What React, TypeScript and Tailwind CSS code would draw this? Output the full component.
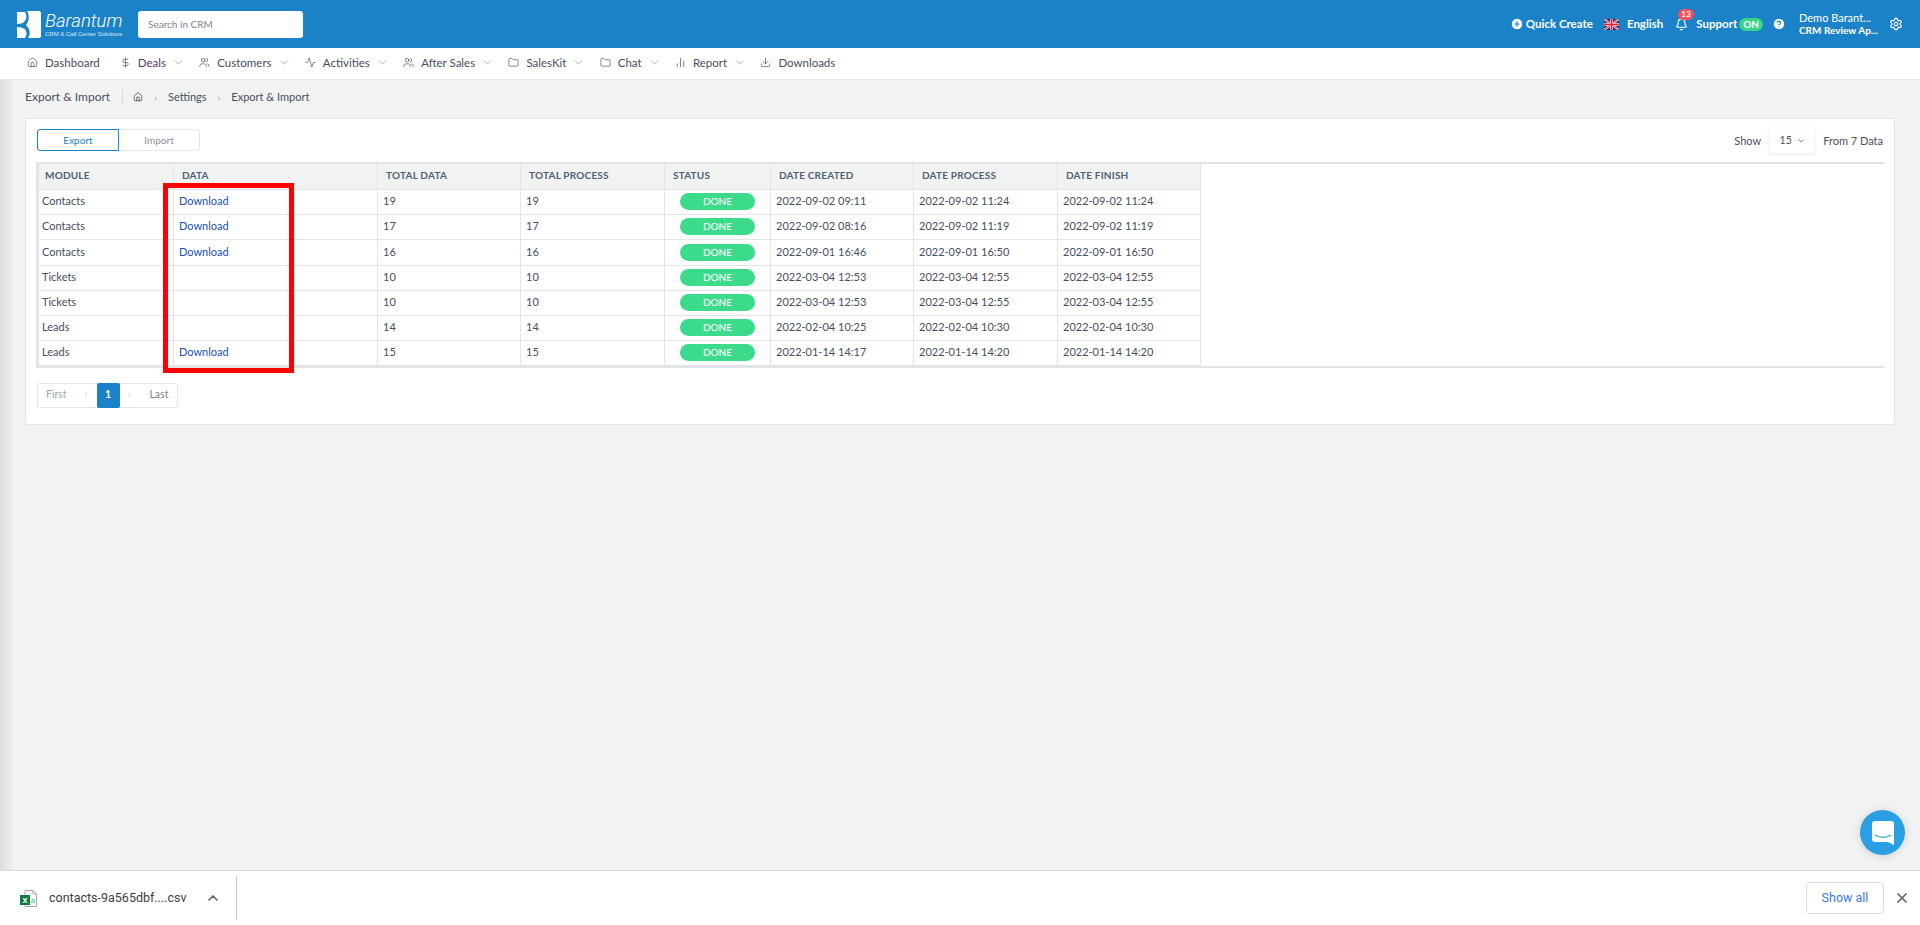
import { Activity, ChevronDown, ChevronUp, CircleHelp, CirclePlus, DollarSign, Download, Folder, Home, Settings, Users, X, Bell, BarChart2 } from "lucide-react";

const navItems = [
  { label: "Dashboard", icon: Home, menu: false, tone: "" },
  { label: "Deals", icon: DollarSign, menu: true, tone: "text-[#553a78]" },
  { label: "Customers", icon: Users, menu: true, tone: "" },
  { label: "Activities", icon: Activity, menu: true, tone: "" },
  { label: "After Sales", icon: Users, menu: true, tone: "" },
  { label: "SalesKit", icon: Folder, menu: true, tone: "" },
  { label: "Chat", icon: Folder, menu: true, tone: "" },
  { label: "Report", icon: BarChart2, menu: true, tone: "" },
  { label: "Downloads", icon: Download, menu: false, tone: "" },
];

const rows = [
  { module: "Contacts", link: true, total: 19, created: "2022-09-02 09:11", process: "2022-09-02 11:24", finish: "2022-09-02 11:24", h: "h-[25px]" },
  { module: "Contacts", link: true, total: 17, created: "2022-09-02 08:16", process: "2022-09-02 11:19", finish: "2022-09-02 11:19", h: "h-[25px]" },
  { module: "Contacts", link: true, total: 16, created: "2022-09-01 16:46", process: "2022-09-01 16:50", finish: "2022-09-01 16:50", h: "h-[26px]" },
  { module: "Tickets", link: false, total: 10, created: "2022-03-04 12:53", process: "2022-03-04 12:55", finish: "2022-03-04 12:55", h: "h-[25px]" },
  { module: "Tickets", link: false, total: 10, created: "2022-03-04 12:53", process: "2022-03-04 12:55", finish: "2022-03-04 12:55", h: "h-[25px]" },
  { module: "Leads", link: false, total: 14, created: "2022-02-04 10:25", process: "2022-02-04 10:30", finish: "2022-02-04 10:30", h: "h-[25px]" },
  { module: "Leads", link: true, total: 15, created: "2022-01-14 14:17", process: "2022-01-14 14:20", finish: "2022-01-14 14:20", h: "h-[25px]" },
];

const columns = [
  { label: "MODULE", width: "w-[135px] pl-[6px]" },
  { label: "DATA", width: "w-[204px] pl-2" },
  { label: "TOTAL DATA", width: "w-[143px] pl-2" },
  { label: "TOTAL PROCESS", width: "w-[144px] pl-2" },
  { label: "STATUS", width: "w-[106px] pl-2" },
  { label: "DATE CREATED", width: "w-[143px] pl-2" },
  { label: "DATE PROCESS", width: "w-[144px] pl-2" },
  { label: "DATE FINISH", width: "w-[143px] pl-2" },
];

function Logo() {
  return (
    <svg width="24" height="27" viewBox="0 0 24 27" fill="#fff">
      <path d="M0 1h8c2 3 2 7-1 10-1 1-4 2-7 2z" />
      <path d="M0 16c4 0 8 1 9 4 1 3 0 5-1 7H0c-1-3-1-8 0-11z" />
      <path d="M10 0h12c1 0 2 1 2 2v23c0 1-1 2-2 2H11c3-4 2-9-2-13 3-4 4-9 1-14z" />
    </svg>
  );
}

function UkFlag() {
  return (
    <svg width="15" height="11" viewBox="0 0 60 44">
      <rect width="60" height="44" fill="#1f2f6f" />
      <path d="M0 0l60 44M60 0L0 44" stroke="#fff" strokeWidth="8" />
      <path d="M0 0l60 44M60 0L0 44" stroke="#d8283c" strokeWidth="4" />
      <path d="M30 0v44M0 22h60" stroke="#fff" strokeWidth="11" />
      <path d="M30 0v44M0 22h60" stroke="#d8283c" strokeWidth="7" />
    </svg>
  );
}

function ExcelIcon() {
  return (
    <svg width="17" height="17" viewBox="0 0 17 17">
      <path d="M5 .5h8l3.5 3.5v12.5H5z" fill="#fff" stroke="#a8a8a8" />
      <path d="M13 .5V4h3.5" fill="none" stroke="#a8a8a8" />
      <rect x="0" y="5" width="10" height="10" fill="#107c41" />
      <text x="5" y="13" textAnchor="middle" fontSize="9" fontWeight="700" fill="#fff" fontFamily="Liberation Sans, sans-serif">x</text>
      <text x="13" y="13" textAnchor="middle" fontSize="8" fill="#33c481" fontFamily="Liberation Sans, sans-serif">a</text>
    </svg>
  );
}

export default function App() {
  return (
    <div className="relative flex h-[925px] flex-col overflow-hidden bg-[#f1f3f3] font-['Lato','Open_Sans',sans-serif] text-[11px] text-[#464e5f]">
      {/* Top bar */}
      <header className="flex h-12 shrink-0 items-center bg-[#1b82c7] pl-[17px] pr-[17px] text-white">
        <Logo />
        <div className="ml-[4px] w-[80px] leading-none">
          <div className="font-['Roboto',sans-serif] text-[18.5px] font-light italic leading-[20px]">Barantum</div>
          <div className="whitespace-nowrap font-['Liberation_Sans',sans-serif] text-[6px] leading-[7px] text-white/80">CRM &amp; Call Center Solutions</div>
        </div>
        <div className="ml-[13px] flex h-[27px] w-[165px] items-center rounded-[3px] bg-white pl-[10px] text-[10px] text-[#7e8299]">
          Search in CRM
        </div>

        <div className="ml-auto flex items-center">
          <CirclePlus size={14} fill="#fff" stroke="#1b82c7" />
          <span className="ml-[2px] text-[11.5px] font-bold">Quick Create</span>
          <span className="ml-[11px]"><UkFlag /></span>
          <span className="ml-[8px] text-[11.5px] font-bold">English</span>
          <span className="relative ml-[12px]">
            <Bell size={13} />
            <span className="absolute -top-[9px] left-[3px] rounded-full bg-[#f1505b] px-[3px] text-[8px] font-bold leading-[11px]">13</span>
          </span>
          <span className="ml-[8px] text-[11.5px] font-bold">Support</span>
          <span className="ml-[2px] rounded-full bg-[#36d486] px-[4px] text-[10px] font-bold leading-[13px]">ON</span>
          <span className="ml-[9px]"><CircleHelp size={14} fill="#fff" stroke="#1b82c7" /></span>
          <div className="ml-[13px] w-[76px] whitespace-nowrap leading-[12px]">
            <div className="text-[11px]">Demo Barant...</div>
            <div className="text-[10px] font-bold">CRM Review Ap...</div>
          </div>
          <Settings size={14} className="ml-[14px]" />
        </div>
      </header>

      {/* Nav */}
      <nav className="flex h-8 shrink-0 items-center border-b border-[#e4e6ef] bg-white pb-[2px] pl-[27px] text-[11.5px] text-[#464e5f]">
        {navItems.map((item) => {
          const Icon = item.icon;
          return (
            <div key={item.label} className={`flex items-center ${item.menu ? "mr-[14.3px]" : "mr-[20px]"}`}>
              <Icon size={11} strokeWidth={1.5} className="mr-[7px]" />
              <span className={item.tone}>{item.label}</span>
              {item.menu && <ChevronDown size={13} strokeWidth={1.5} className="ml-[6px] text-[#9a9faf]" />}
            </div>
          );
        })}
      </nav>

      {/* Breadcrumb */}
      <div className="flex h-[34px] shrink-0 items-center pl-[25px] text-[11px] text-[#4a4f5e]">
        <span className="text-xs">Export &amp; Import</span>
        <span className="ml-3 h-[15px] w-px bg-[#d5d8e0]" />
        <Home size={10} className="ml-[10px]" />
        <span className="ml-[11px] text-[10px] text-[#9a9faf]">›</span>
        <span className="ml-[11px]">Settings</span>
        <span className="ml-[11px] text-[10px] text-[#9a9faf]">›</span>
        <span className="ml-[11px]">Export &amp; Import</span>
      </div>

      {/* Card */}
      <main className="ml-[25px] mt-1 h-[307px] w-[1870px] rounded-[3px] border border-[#dfe5ee] bg-white px-[10px] pt-[10px]">
        <div className="flex h-[33px] items-start">
          <div className="ml-px flex h-[22px] w-[163px] text-[10px]">
            <div className="flex w-[82px] items-center justify-center rounded-l-[3px] border border-[#1b82c7] text-[#1b82c7]">Export</div>
            <div className="flex w-[81px] items-center justify-center rounded-r-[3px] border border-l-0 border-[#e4e6ef] text-[#8a8f9e]">Import</div>
          </div>
          <div className="ml-auto mr-[1px] flex h-6 items-center text-[11px] text-[#4a4f5e]">
            <span>Show</span>
            <div className="ml-[9px] flex h-6 w-[44px] items-center justify-center gap-[5px] rounded-[3px] bg-white text-[10.5px] shadow-[0_1px_4px_rgba(0,0,0,0.1)]">
              15 <ChevronDown size={8} />
            </div>
            <span className="ml-[9px]">From 7 Data</span>
          </div>
        </div>

        <div className="relative w-full border-y-2 border-l-2 border-[#e1e5e9]">
          <table className="w-[1162px] table-fixed border-collapse">
            <thead>
              <tr className="h-[25px] bg-[#f1f3f3]">
                {columns.map((col) => (
                  <th key={col.label} className={`${col.width} border border-t-0 border-[#e1e5e9] pb-[2px] text-left text-[10px] font-bold tracking-[0.2px] text-[#4f5f73]`}>
                    {col.label}
                  </th>
                ))}
              </tr>
            </thead>
            <tbody>
              {rows.map((row, i) => (
                <tr key={i} className={row.h}>
                  <td className="border border-[#e1e5e9] pl-[3px]">{row.module}</td>
                  <td className="border border-[#e1e5e9] pl-[5px]">
                    {row.link && <span className="text-[#1a4fba]">Download</span>}
                  </td>
                  <td className="border border-[#e1e5e9] pl-[5px]">{row.total}</td>
                  <td className="border border-[#e1e5e9] pl-[5px]">{row.total}</td>
                  <td className="border border-[#e1e5e9]">
                    <div className="mx-auto flex h-[17px] w-[75px] items-center justify-center rounded-full bg-[#3bdb8b] text-[10px] font-medium text-white">DONE</div>
                  </td>
                  <td className="border border-[#e1e5e9] pl-[5px]">{row.created}</td>
                  <td className="border border-[#e1e5e9] pl-[5px]">{row.process}</td>
                  <td className="border border-[#e1e5e9] pl-[5px]">{row.finish}</td>
                </tr>
              ))}
            </tbody>
          </table>
          {/* annotation drawn over the screenshot */}
          <div className="pointer-events-none absolute left-[125px] top-[19px] h-[190px] w-[131px] border-[5px] border-[#ff0000]" />
        </div>

        <div className="ml-px mt-[15px] flex h-[25px] w-[141px] items-center rounded-[3px] border border-[#e4e6ef] text-[10.5px] text-[#a1a5b7]">
          <span className="ml-[8px]">First</span>
          <span className="ml-[18px] text-[#d5d8e0]">‹</span>
          <span className="ml-[9px] flex h-[25px] w-[23px] items-center justify-center rounded-[2px] bg-[#1b82c7] font-bold text-white">1</span>
          <span className="ml-[8px] text-[#d5d8e0]">›</span>
          <span className="ml-[19px] text-[#7e8299]">Last</span>
        </div>
      </main>

      {/* Left edge shadow */}
      <div className="pointer-events-none absolute bottom-[55px] left-0 top-[80px] w-[14px] bg-gradient-to-r from-[#dcdede] to-transparent" />

      {/* Chat launcher */}
      <div className="absolute left-[1860px] top-[810px] flex h-[45px] w-[45px] items-center justify-center rounded-full bg-[#2a9fe3] shadow-[0_1px_8px_rgba(0,0,0,0.15)]">
        <svg width="22" height="24" viewBox="0 0 22 24">
          <path d="M3 0h16a3 3 0 0 1 3 3v21l-6-3H3a3 3 0 0 1-3-3V3a3 3 0 0 1 3-3z" fill="#fff" />
          <path d="M3 14c5 3 11 3 16 0" fill="none" stroke="#2a9fe3" strokeWidth="1.2" />
        </svg>
      </div>

      {/* Chrome download shelf */}
      <footer className="mt-auto flex h-[55px] shrink-0 items-center border-t border-[#dcdcdc] bg-white pl-[20px] pr-[10px] font-['Roboto',sans-serif] text-[12.5px] text-[#3c4043]">
        <ExcelIcon />
        <span className="ml-[12px] w-[137px] whitespace-nowrap">contacts-9a565dbf....csv</span>
        <ChevronUp size={16} strokeWidth={2.5} className="ml-[19px] text-[#5f6368]" />
        <span className="ml-[15px] h-[44px] w-px bg-[#c8c8c8]" />
        <div className="ml-auto flex h-8 w-[78px] items-center justify-center rounded-[4px] border border-[#dadce0] text-[#3b78e7]">Show all</div>
        <X size={16} strokeWidth={2.5} className="ml-[10px] text-[#5f6368]" />
      </footer>
    </div>
  );
}
